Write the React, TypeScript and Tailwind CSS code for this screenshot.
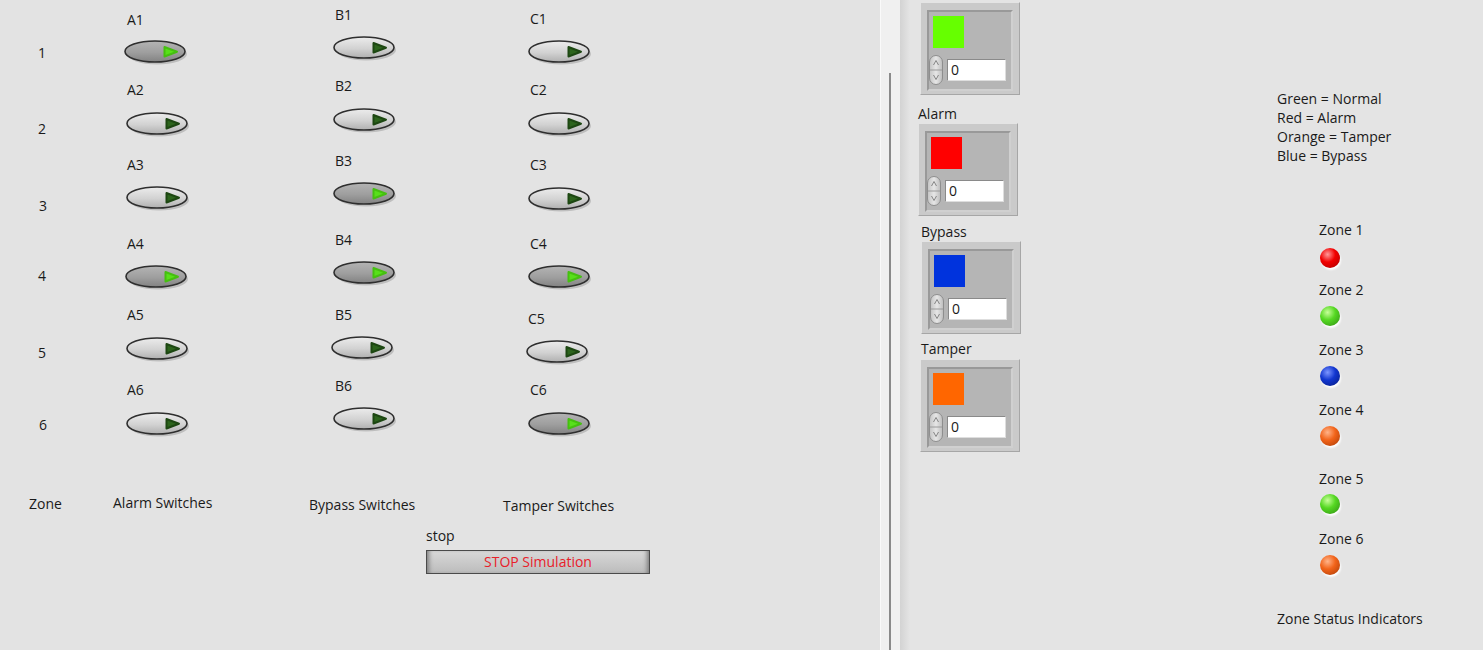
import React from "react";

const txt = "text-[14px] leading-[18px] text-[#1a1a1a]";

const Toggle = ({ on, className }: { on?: boolean; className?: string }) => (
  <svg width="66" height="26" viewBox="0 0 66 26" className={`block ${className ?? ""}`}>
    <defs>
      <linearGradient id="swOff" x1="0" y1="0" x2="0" y2="1">
        <stop offset="0" stopColor="#ececec" />
        <stop offset="0.55" stopColor="#d2d2d2" />
        <stop offset="1" stopColor="#b0b0b0" />
      </linearGradient>
      <linearGradient id="swOn" x1="0" y1="0" x2="0" y2="1">
        <stop offset="0" stopColor="#b4b4b4" />
        <stop offset="0.55" stopColor="#9e9e9e" />
        <stop offset="1" stopColor="#828282" />
      </linearGradient>
    </defs>
    <ellipse cx="33" cy="14" rx="30" ry="10.5" fill="#000" opacity="0.16" />
    <ellipse cx="31" cy="11.5" rx="30" ry="10.5" fill={on ? "url(#swOn)" : "url(#swOff)"} stroke="#2e2e2e" strokeWidth="1.6" />
    <path
      d="M40.5 7 L40.5 16.5 L53 11.7 Z"
      fill={on ? "#58e01a" : "#2c641c"}
      stroke={on ? "#45c010" : "#1d4712"}
      strokeWidth="2"
      strokeLinejoin="round"
    />
  </svg>
);

const Spinner = () => (
  <svg width="14" height="30" viewBox="0 0 14 30" className="block">
    <defs>
      <linearGradient id="spin" x1="0" y1="0" x2="1" y2="0">
        <stop offset="0" stopColor="#c4c4c4" />
        <stop offset="0.5" stopColor="#e6e6e6" />
        <stop offset="1" stopColor="#bdbdbd" />
      </linearGradient>
    </defs>
    <rect x="0.5" y="0.5" width="13" height="29" rx="6.5" fill="url(#spin)" stroke="#8e8e8e" />
    <line x1="1" y1="15" x2="13" y2="15" stroke="#9a9a9a" />
    <path d="M4.5 10 L7 5.5 L9.5 10" fill="none" stroke="#7a7a7a" strokeWidth="0.9" />
    <path d="M4.5 20 L7 24.5 L9.5 20" fill="none" stroke="#7a7a7a" strokeWidth="0.9" />
  </svg>
);

const ColorBox = ({ swatch, className }: { swatch: string; className?: string }) => (
  <div
    className={`flex w-[100px] h-[93px] bg-[#cacaca] border border-t-[#e4e4e4] border-l-[#e4e4e4] border-r-[#a6a6a6] border-b-[#a6a6a6] pt-[7px] pl-[6px] pr-[6px] pb-[3px] ${className ?? ""}`}
  >
    <div className="flex-1 flex flex-col bg-[#b5b5b5] border-2 border-t-[#999999] border-l-[#999999] border-r-[#d0d0d0] border-b-[#d0d0d0]">
      <div className={`w-[31px] h-[32px] mt-[4px] ml-[4px] ${swatch}`} />
      <div className="flex mt-[7px]">
        <Spinner />
        <div className="w-[59px] h-[22px] mt-[4px] ml-[4px] bg-white border border-t-[#8a8a8a] border-l-[#8a8a8a] border-r-[#dedede] border-b-[#dedede] pl-[3px] text-[14px] leading-[20px] text-[#1a1a1a]">
          0
        </div>
      </div>
    </div>
  </div>
);

const ledColors: Record<string, string> = {
  red: "bg-[radial-gradient(circle_at_38%_32%,#ff9a9a_0%,#f20000_42%,#a80000_100%)]",
  green: "bg-[radial-gradient(circle_at_38%_32%,#c8ff9a_0%,#55d822_42%,#2e8d12_100%)]",
  blue: "bg-[radial-gradient(circle_at_38%_32%,#7d96ff_0%,#1236d0_42%,#061a7c_100%)]",
  orange: "bg-[radial-gradient(circle_at_38%_32%,#ffb48a_0%,#f2641a_42%,#a83a05_100%)]",
};

const Led = ({ color, className }: { color: string; className?: string }) => (
  <div
    className={`w-[20px] h-[20px] rounded-full shadow-[1px_2px_2px_#ffffff] ${ledColors[color]} ${className ?? ""}`}
  />
);

const App = () => {
  return (
    <div className="flex w-[1483px] h-[650px] overflow-hidden bg-[#e3e3e3] font-['Open_Sans',sans-serif]">
      {/* left panel: switches */}
      <div className="w-[880px] flex flex-col bg-[#e3e3e3]">
        <div className="flex pl-[29px]">
          <div className={`w-[84px] flex flex-col ${txt}`}>
            <div className="mt-[44px] pl-[9px]">1</div>
            <div className="mt-[58px] pl-[9px]">2</div>
            <div className="mt-[59px] pl-[10px]">3</div>
            <div className="mt-[52px] pl-[9px]">4</div>
            <div className="mt-[59px] pl-[9px]">5</div>
            <div className="mt-[54px] pl-[10px]">6</div>
            <div className="mt-[61px]">Zone</div>
          </div>

          <div className={`w-[196px] flex flex-col items-start ${txt}`}>
            <div className="mt-[11px] ml-[14px]">A1</div>
            <Toggle on className="mt-[11px] ml-[11px]" />
            <div className="mt-[15px] ml-[14px]">A2</div>
            <Toggle className="mt-[13px] ml-[13px]" />
            <div className="mt-[18px] ml-[14px]">A3</div>
            <Toggle className="mt-[12px] ml-[13px]" />
            <div className="mt-[23px] ml-[14px]">A4</div>
            <Toggle on className="mt-[12px] ml-[12px]" />
            <div className="mt-[15px] ml-[14px]">A5</div>
            <Toggle className="mt-[13px] ml-[13px]" />
            <div className="mt-[18px] ml-[14px]">A6</div>
            <Toggle className="mt-[13px] ml-[13px]" />
            <div className="mt-[56px]">Alarm Switches</div>
          </div>

          <div className={`w-[194px] flex flex-col items-start ${txt}`}>
            <div className="mt-[6px] ml-[26px]">B1</div>
            <Toggle className="mt-[12px] ml-[24px]" />
            <div className="mt-[15px] ml-[26px]">B2</div>
            <Toggle className="mt-[13px] ml-[24px]" />
            <div className="mt-[18px] ml-[26px]">B3</div>
            <Toggle on className="mt-[12px] ml-[24px]" />
            <div className="mt-[23px] ml-[26px]">B4</div>
            <Toggle on className="mt-[12px] ml-[24px]" />
            <div className="mt-[19px] ml-[26px]">B5</div>
            <Toggle className="mt-[12px] ml-[22px]" />
            <div className="mt-[15px] ml-[26px]">B6</div>
            <Toggle className="mt-[12px] ml-[24px]" />
            <div className="mt-[63px]">Bypass Switches</div>
          </div>

          <div className={`w-[200px] flex flex-col items-start ${txt}`}>
            <div className="mt-[10px] ml-[27px]">C1</div>
            <Toggle className="mt-[12px] ml-[25px]" />
            <div className="mt-[15px] ml-[27px]">C2</div>
            <Toggle className="mt-[13px] ml-[25px]" />
            <div className="mt-[18px] ml-[27px]">C3</div>
            <Toggle className="mt-[13px] ml-[25px]" />
            <div className="mt-[22px] ml-[27px]">C4</div>
            <Toggle on className="mt-[12px] ml-[25px]" />
            <div className="mt-[19px] ml-[25px]">C5</div>
            <Toggle className="mt-[12px] ml-[23px]" />
            <div className="mt-[15px] ml-[27px]">C6</div>
            <Toggle on className="mt-[13px] ml-[25px]" />
            <div className="mt-[59px]">Tamper Switches</div>
          </div>
        </div>

        <div className="ml-[426px] mt-[12px] flex flex-col items-start">
          <div className={txt}>stop</div>
          <button className="mt-[5px] w-[224px] h-[24px] border border-[#4a4a4a] bg-[linear-gradient(to_bottom,#d8d8d8,#bcbcbc)] shadow-[inset_5px_0_4px_-3px_#7c7c7c,inset_-5px_0_4px_-3px_#7c7c7c] text-[14px] leading-[22px] text-[#e8202a] text-center">
            STOP Simulation
          </button>
        </div>
      </div>

      {/* splitter */}
      <div className="w-[20px] flex bg-[#f0f0f0] border-l border-l-[#fafafa] pl-[8px] pt-[73px]">
        <div className="w-[2px] h-full bg-[#8a8a8a]" />
      </div>

      {/* right panel: status */}
      <div className="flex-1 flex bg-[linear-gradient(to_right,#d3d3d3,#e4e4e4_10px)]">
        <div className={`w-[102px] ml-[18px] flex flex-col items-start ${txt}`}>
          <ColorBox swatch="bg-[#66ff00]" className="mt-[2px] ml-[2px]" />
          <div className="mt-[10px]">Alarm</div>
          <ColorBox swatch="bg-[#ff0000]" className="ml-[0px]" />
          <div className="mt-[7px] ml-[3px]">Bypass</div>
          <ColorBox swatch="bg-[#0033dd]" className="ml-[3px]" />
          <div className="mt-[6px] ml-[3px]">Tamper</div>
          <ColorBox swatch="bg-[#ff6600]" className="mt-[1px] ml-[2px]" />
        </div>

        <div className={`ml-[257px] flex flex-col items-start ${txt}`}>
          <div className="mt-[89px] leading-[19px]">
            <div>Green = Normal</div>
            <div>Red = Alarm</div>
            <div>Orange = Tamper</div>
            <div>Blue = Bypass</div>
          </div>
          <div className="mt-[56px] ml-[42px]">Zone 1</div>
          <Led color="red" className="mt-[9px] ml-[43px]" />
          <div className="mt-[13px] ml-[42px]">Zone 2</div>
          <Led color="green" className="mt-[7px] ml-[43px]" />
          <div className="mt-[15px] ml-[42px]">Zone 3</div>
          <Led color="blue" className="mt-[7px] ml-[43px]" />
          <div className="mt-[15px] ml-[42px]">Zone 4</div>
          <Led color="orange" className="mt-[7px] ml-[43px]" />
          <div className="mt-[24px] ml-[42px]">Zone 5</div>
          <Led color="green" className="mt-[6px] ml-[43px]" />
          <div className="mt-[16px] ml-[42px]">Zone 6</div>
          <Led color="orange" className="mt-[7px] ml-[43px]" />
          <div className="mt-[35px]">Zone Status Indicators</div>
        </div>
      </div>
    </div>
  );
};

export default App;
